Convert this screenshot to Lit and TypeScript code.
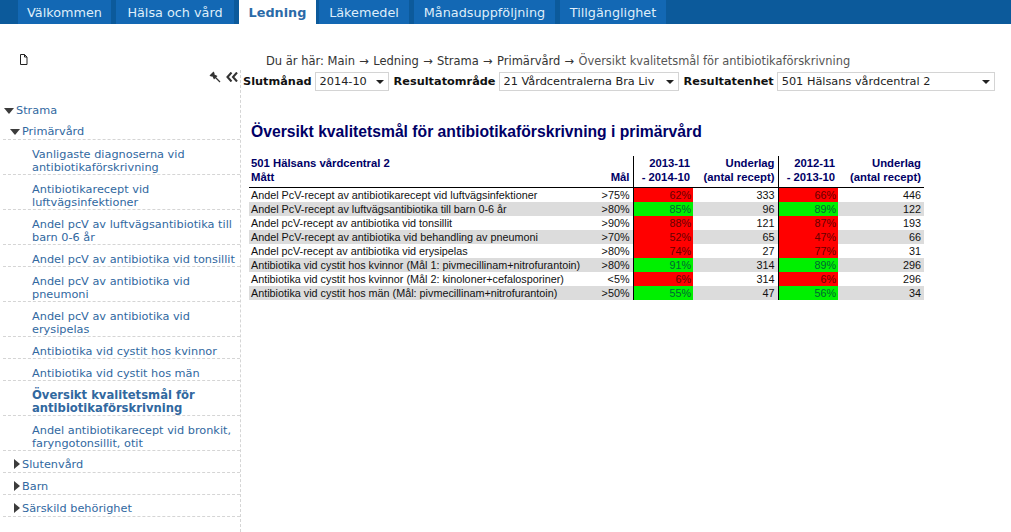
import { LitElement, html, css } from "lit";
import { customElement } from "lit/decorators.js";

const tabs: [string, number][] = [["Välkommen", 93], ["Hälsa och vård", 118], ["Ledning", 77], ["Läkemedel", 90], ["Månadsuppföljning", 141], ["Tillgänglighet", 106]];
const items: [string, boolean?][] = [
  ["Vanligaste diagnoserna vid antibiotikaförskrivning"],
  ["Antibiotikarecept vid luftvägsinfektioner"],
  ["Andel pcV av luftvägsantibiotika till barn 0-6 år"],
  ["Andel pcV av antibiotika vid tonsillit"],
  ["Andel pcV av antibiotika vid pneumoni"],
  ["Andel pcV av antibiotika vid erysipelas"],
  ["Antibiotika vid cystit hos kvinnor"],
  ["Antibiotika vid cystit hos män"],
  ["Översikt kvalitetsmål för antibiotikaförskrivning", true],
  ["Andel antibiotikarecept vid bronkit, faryngotonsillit, otit"],
];
const rows: [string, string, string, boolean, string, string, boolean, string][] = [
  ["Andel PcV-recept av antibiotikarecept vid luftvägsinfektioner", ">75%", "62%", false, "333", "66%", false, "446"],
  ["Andel PcV-recept av luftvägsantibiotika till barn 0-6 år", ">80%", "85%", true, "96", "89%", true, "122"],
  ["Andel pcV-recept av antibiotika vid tonsillit", ">90%", "88%", false, "121", "87%", false, "193"],
  ["Andel PcV-recept av antibiotika vid behandling av pneumoni", ">70%", "52%", false, "65", "47%", false, "66"],
  ["Andel pcV-recept av antibiotika vid erysipelas", ">80%", "74%", false, "27", "77%", false, "31"],
  ["Antibiotika vid cystit hos kvinnor (Mål 1: pivmecillinam+nitrofurantoin)", ">80%", "91%", true, "314", "89%", true, "296"],
  ["Antibiotika vid cystit hos kvinnor (Mål 2: kinoloner+cefalosporiner)", "<5%", "6%", false, "314", "6%", false, "296"],
  ["Antibiotika vid cystit hos män (Mål: pivmecillinam+nitrofurantoin)", ">50%", "55%", true, "47", "56%", true, "34"],
];

@customElement("app-root")
export class AppRoot extends LitElement {
  static styles = css`
    :host { display: block; width: 1011px; height: 532px; overflow: hidden; background: #fff; font-family: "DejaVu Sans", Verdana, sans-serif; font-size: 11px; }
    .bar { display: flex; height: 24px; background: #0c5a9b; padding-left: 18px; gap: 5px; }
    .tab { flex: none; height: 24px; box-sizing: border-box; display: flex; align-items: center; justify-content: center; background: #1368b4; color: #dfeefa; font-size: 12.8px; white-space: nowrap; }
    .tab.on { background: #fff; color: #2a6aa8; font-weight: bold; margin-right: -2px; }
    .body { display: flex; }
    .side { width: 241px; flex: none; box-sizing: border-box; height: 508px; position: relative; }
    .side::after { content: ""; position: absolute; right: 0; top: 46px; bottom: 0; border-right: 1px dashed #d5d5d5; }
    .tools { height: 76px; position: relative; }
    .doc { position: absolute; left: 19px; top: 30px; }
    .pin { position: absolute; left: 209px; top: 47px; }
    .back { position: absolute; left: 226px; top: 48px; }
    .tree { color: #31689f; font-size: 11.3px; line-height: 13px; }
    .node { display: flex; align-items: center; box-sizing: border-box; height: 22px; white-space: nowrap; }
    .n1 { height: 21px; padding-left: 4px; gap: 2px; }
    .n2 { border-bottom: 1px dashed #d5d5d5; margin: 0 1px 0 3px; padding: 5px 0 0 11px; gap: 2px; }
    .n2.first { height: 19px; padding: 3px 0 0 7px; }
    .item { padding: 8px 2px 0 29px; margin: 0 1px 0 3px; border-bottom: 1px dashed #d5d5d5; }
    .item.on { font-weight: bold; font-size: 11.6px; }
    .tri-d { flex: none; width: 0; height: 0; border: 5px solid transparent; border-top: 6px solid #3c3c3c; border-bottom: 0; }
    .tri-r { flex: none; width: 0; height: 0; border: 5px solid transparent; border-left: 6px solid #3c3c3c; border-right: 0; }
    .main { flex: 1; min-width: 0; padding-left: 2px; }
    .crumb { margin: 30px 0 0 23px; height: 14px; line-height: 14px; font-size: 11.5px; color: #333; white-space: nowrap; }
    .crumb b { font-weight: normal; margin: 0 .6px; }
    .crumb span { color: #555; font-size: 11.4px; }
    .filters { display: flex; align-items: center; gap: 3px; margin-top: 4px; height: 19px; font-weight: bold; font-size: 11.3px; color: #111; white-space: nowrap; }
    .sel { position: relative; display: block; flex: none; height: 19px; margin-right: 2px; box-sizing: border-box; border: 1px solid #d4d4d4; }
    select { appearance: none; border: 0; background: #fff; font: 11.3px "DejaVu Sans", Verdana, sans-serif; color: #222; width: 100%; height: 17px; padding: 0 0 0 4px; display: block; outline: 0; }
    .arrow { position: absolute; right: 4px; top: 7px; width: 0; height: 0; border: 4px solid transparent; border-top: 4px solid #222; border-bottom: 0; pointer-events: none; }
    h1 { margin: 32px 0 0 8px; color: #000066; font: bold 15.7px/18px "Liberation Sans", Arial, sans-serif; white-space: nowrap; }
    table { border-collapse: collapse; table-layout: fixed; margin: 15px 0 0 6px; width: 675px; font: 10.8px/14px "Liberation Sans", Arial, sans-serif; color: #111; }
    td, th { padding: 0 3px; height: 14px; white-space: nowrap; overflow: hidden; }
    th { color: #000066; font-weight: bold; font-size: 11.3px; line-height: 14px; text-align: right; vertical-align: top; }
    td.l, th.l { padding-left: 2px; text-align: left; }
    .hb th { height: 17px; border-bottom: 1px solid #000; }
    .r { text-align: right; }
    .v { border-left: 1px solid #000; }
    tbody tr:nth-child(even) td { background: #dcdcdc; }
    tbody tr td.red { background: #ff0000; color: #600; padding-right: 2px; }
    tbody tr td.green { background: #00f000; color: #063; padding-right: 2px; }
  `;

  render() {
    const sel = (w: number, label: string) => html`<label class="sel" style="width:${w}px"><select><option>${label}</option></select><i class="arrow"></i></label>`;
    return html`
      <div class="bar">${tabs.map(([t, w]) => html`<div class="tab ${t === "Ledning" ? "on" : ""}" style="width:${w}px">${t}</div>`)}</div>
      <div class="body">
        <aside class="side">
          <div class="tools">
            <svg class="doc" width="9" height="11" viewBox="0 0 9 11"><path d="M1.500 .500h4l2.500 2.500v7.500h-6.500z M5.500 .500v2.500h2.500" fill="#fff" stroke="#222"/></svg>
            <svg class="pin" width="12" height="12" viewBox="0 0 12 12"><path d="M.5 4.500 L4.500 .500 L5.500 2 L5.500 3.500 L8.500 5 L5 8.500 L3.500 5.500 L2 5.500z" fill="#333"/><path d="M6 6 L11 11" stroke="#333" stroke-width="1.200"/></svg>
            <svg class="back" width="12" height="10" viewBox="0 0 12 10"><path d="M5.500 .500 L1.500 5 L5.500 9.500 M11 .500 L7 5 L11 9.500" fill="none" stroke="#333" stroke-width="2.100"/></svg>
          </div>
          <nav class="tree">
            <div class="node n1"><i class="tri-d"></i>Strama</div>
            <div class="node n2 first"><i class="tri-d"></i>Primärvård</div>
            ${items.map(([t, on]) => html`<div class="item ${on ? "on" : ""}">${t}</div>`)}
            ${["Slutenvård", "Barn", "Särskild behörighet"].map((t) => html`<div class="node n2"><i class="tri-r"></i>${t}</div>`)}
          </nav>
        </aside>
        <main class="main">
          <div class="crumb">Du är här: Main <b>→</b> Ledning <b>→</b> Strama <b>→</b> Primärvård <b>→</b> <span>Översikt kvalitetsmål för antibiotikaförskrivning</span></div>
          <div class="filters">
            Slutmånad ${sel(74, "2014-10")}
            Resultatområde ${sel(180, "21 Vårdcentralerna Bra Liv")}
            Resultatenhet ${sel(218, "501 Hälsans vårdcentral 2")}
          </div>
          <h1>Översikt kvalitetsmål för antibiotikaförskrivning i primärvård</h1>
          <table>
            <colgroup><col style="width:348px"><col style="width:36px"><col style="width:60px"><col style="width:85px"><col style="width:60px"><col style="width:86px"></colgroup>
            <thead>
              <tr><th class="l">501 Hälsans vårdcentral 2</th><th></th><th class="v">2013-11</th><th>Underlag</th><th class="v">2012-11</th><th>Underlag</th></tr>
              <tr class="hb"><th class="l">Mått</th><th>Mål</th><th class="v">- 2014-10</th><th>(antal recept)</th><th class="v">- 2013-10</th><th>(antal recept)</th></tr>
            </thead>
            <tbody>
              ${rows.map((r) => html`<tr>
                <td class="l">${r[0]}</td><td class="r">${r[1]}</td>
                <td class="r v ${r[3] ? "green" : "red"}">${r[2]}</td><td class="r">${r[4]}</td>
                <td class="r v ${r[6] ? "green" : "red"}">${r[5]}</td><td class="r">${r[7]}</td>
              </tr>`)}
            </tbody>
          </table>
        </main>
      </div>
    `;
  }
}
